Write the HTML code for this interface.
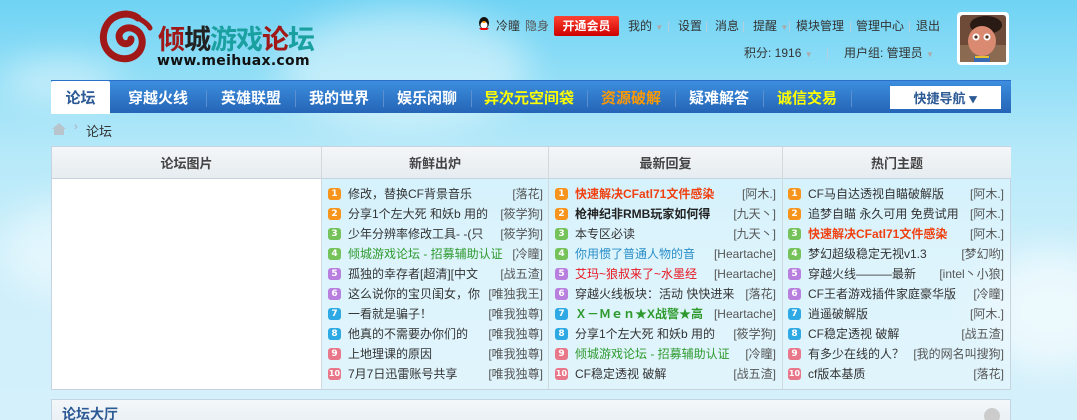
<!DOCTYPE html>
<html><head><meta charset="utf-8">
<style>
*{margin:0;padding:0;box-sizing:border-box}
html,body{width:1077px;height:420px;overflow:hidden}
body{font:12px "Liberation Sans","Noto Sans CJK SC",sans-serif;color:#333;
background:linear-gradient(180deg,#6fd3f4 0px,#8adcf6 60px,#b5e9f9 150px,#cdeffb 260px,#d4f0fb 420px);position:relative}
.cloud{position:absolute;border-radius:50%;background:rgba(255,255,255,.45);filter:blur(18px)}
.a{position:absolute}
.logo-cn{position:absolute;left:158px;top:22px;font:bold 27px "Noto Sans CJK SC",sans-serif;line-height:32px;letter-spacing:-1px}
.logo-en{position:absolute;left:157px;top:52px;font:bold 14px "DejaVu Sans",sans-serif;line-height:18px;color:#111;letter-spacing:.3px}
.top{position:absolute;top:18px;font-size:12px;line-height:16px;color:#333;white-space:nowrap}
.top span{position:absolute}
.sep{color:#b8cfdc}
.ar{color:#aaa;font-size:8px}
.nav{position:absolute;left:51px;top:80px;width:960px;height:33px;background:linear-gradient(#3c8ede,#2564b6);border-top:1px solid #2a70c8}
.nav div{position:absolute;top:0;height:33px;font:bold 15px "Noto Sans CJK SC",sans-serif;line-height:33px;color:#fff;text-align:center}
.nav i{position:absolute;top:9px;width:1px;height:17px;background:#5b8fd0}
.tbl{position:absolute;left:51px;top:146px;width:960px;height:244px;border:1px solid #c7d3de;background:rgba(235,248,253,.55)}
.th{position:absolute;top:0;height:32px;text-align:center;font:bold 13px "Noto Sans CJK SC",sans-serif;line-height:32px;color:#444;background:linear-gradient(#f4f6f8,#e6ecf0);border-bottom:1px solid #c7d3de}
.vl{position:absolute;top:0;width:1px;height:242px;background:#d2d9de}
.row{position:absolute;height:20px;line-height:20px;font-size:12px;white-space:nowrap}
.b{position:absolute;left:0;top:4px;width:13px;height:12px;border-radius:3px;color:#fff;font:bold 9px "DejaVu Sans",sans-serif;line-height:12px;text-align:center}
.t{position:absolute;left:20px}
.u{position:absolute;right:0;color:#555}
.c1,.c2{background:#f7941d}.c3,.c4{background:#76c25a}.c5,.c6{background:#b97fde}.c7,.c8{background:#2ea9e3}.c9,.c10{background:#e9778a}
.sec{position:absolute;left:51px;top:399px;width:960px;height:30px;border:1px solid #c3d4e2;background:linear-gradient(#f3f7fa,#e8eef3)}
</style></head><body>
<div class="cloud" style="left:280px;top:10px;width:250px;height:120px"></div>
<div class="cloud" style="left:0;top:200px;width:150px;height:100px"></div>
<div class="cloud" style="left:980px;top:250px;width:140px;height:120px;background:rgba(255,255,255,.6)"></div>
<div class="cloud" style="left:0;top:60px;width:120px;height:40px;background:rgba(255,255,255,.5)"></div>

<svg class="a" style="left:98px;top:8px" width="58" height="58" viewBox="0 0 58 58">
<path d="M40 10 C30 2 10 6 6 24 C2 42 18 54 32 50 C46 46 48 28 38 22 C28 16 18 24 22 32 C25 38 33 36 33 31" fill="none" stroke="#a01818" stroke-width="7" stroke-linecap="round"/>
<path d="M38 9 C44 12 50 16 52 20" fill="none" stroke="#a01818" stroke-width="5" stroke-linecap="round"/>
</svg>
<div class="logo-cn"><span style="color:#a01818">倾</span><span style="color:#222">城</span><span style="color:#1aa0a0">游戏</span><span style="color:#a01818">论</span><span style="color:#1aa0a0">坛</span></div>
<div class="logo-en">www.meihuax.com</div>

<svg class="a" style="left:476px;top:16px" width="16" height="16" viewBox="0 0 16 16"><ellipse cx="8" cy="7" rx="5" ry="6" fill="#111"/><ellipse cx="8" cy="9" rx="3.5" ry="3.5" fill="#fff"/><path d="M3 12 h10 l-2 2 h-6z" fill="#e00"/><ellipse cx="8" cy="6" rx="1.8" ry="1" fill="#f90"/></svg>
<div class="top" style="left:0;width:1077px">
<span style="left:496px">冷瞳</span><span style="left:525px;color:#555">隐身</span>
<span style="left:554px;top:-2px;width:65px;height:20px;background:linear-gradient(#f43,#c00);color:#fff;font-weight:bold;text-align:center;line-height:20px;border-radius:2px">开通会员</span>
<span style="left:628px">我的 <span class="ar" style="position:static">▼</span></span>
<span class="sep" style="left:667px">|</span>
<span style="left:678px">设置</span><span class="sep" style="left:705px">|</span>
<span style="left:715px">消息</span><span class="sep" style="left:742px">|</span>
<span style="left:753px">提醒 <span class="ar" style="position:static">▼</span></span><span class="sep" style="left:788px">|</span>
<span style="left:796px">模块管理</span><span class="sep" style="left:849px">|</span>
<span style="left:856px">管理中心</span><span class="sep" style="left:908px">|</span>
<span style="left:916px">退出</span>
<span style="left:744px;top:27px">积分: 1916 <span class="ar" style="position:static">▼</span></span>
<span class="sep" style="left:826px;top:27px">|</span>
<span style="left:844px;top:27px">用户组: 管理员 <span class="ar" style="position:static">▼</span></span>
</div>
<div class="a" style="left:957px;top:12px;width:52px;height:53px;background:#fff;border-radius:4px;padding:3px">
<svg width="46" height="47" viewBox="0 0 46 47"><rect width="46" height="47" rx="3" fill="#6e4a38"/><rect y="30" width="46" height="17" fill="#8a6a50"/><ellipse cx="26" cy="10" rx="16" ry="9" fill="#2a1a14"/><ellipse cx="22" cy="26" rx="14" ry="15" fill="#d98a70"/><circle cx="16" cy="22" r="3.5" fill="#fff"/><circle cx="27" cy="22" r="3.5" fill="#fff"/><circle cx="16" cy="22" r="1.6" fill="#532"/><circle cx="27" cy="22" r="1.6" fill="#532"/><path d="M14 41 h16 v6 h-16z" fill="#3a6bb0"/><path d="M15 41 h14 v2 h-14z" fill="#e8c030"/></svg></div>

<div class="nav">
<div style="left:0;width:59px;background:#fff;color:#2c5a95;border-radius:2px 2px 0 0">论坛</div>
<div style="left:64px;width:86px">穿越火线</div><i style="left:155px"></i>
<div style="left:156px;width:88px">英雄联盟</div><i style="left:244px"></i>
<div style="left:244px;width:88px">我的世界</div><i style="left:332px"></i>
<div style="left:332px;width:88px">娱乐闲聊</div><i style="left:420px"></i>
<div style="left:420px;width:116px;color:#ff0">异次元空间袋</div><i style="left:536px"></i>
<div style="left:536px;width:88px;color:#f90">资源破解</div><i style="left:624px"></i>
<div style="left:624px;width:88px">疑难解答</div><i style="left:712px"></i>
<div style="left:712px;width:88px;color:#ff0">诚信交易</div><i style="left:800px"></i>
<div style="left:839px;top:5px;width:111px;height:23px;line-height:23px;background:#fff;color:#2c5a95;font-size:13px">快捷导航 <span style="font-size:9px">▼</span></div>
</div>

<svg class="a" style="left:52px;top:123px" width="14" height="12" viewBox="0 0 14 12"><path d="M7 0 L14 6 H12 V12 H2 V6 H0Z" fill="#b7c4cc"/></svg>
<div class="a" style="left:74px;top:121px;color:#aab;font-size:11px">›</div>
<div class="a" style="left:86px;top:121px;font-size:13px;color:#333">论坛</div>

<div class="tbl">
<div style="position:absolute;left:0;top:0;width:269px;height:242px;background:#fff"></div>
<div class="th" style="left:0;width:269px">论坛图片</div>
<div class="th" style="left:270px;width:226px">新鲜出炉</div>
<div class="th" style="left:497px;width:233px">最新回复</div>
<div class="th" style="left:731px;width:228px">热门主题</div>
<div class="vl" style="left:269px"></div><div class="vl" style="left:496px"></div><div class="vl" style="left:730px"></div>
</div>
<div class="sec"><div style="position:absolute;left:10px;top:4px;font:bold 14px 'Noto Sans CJK SC',sans-serif;line-height:20px;color:#2c5a95">论坛大厅</div>
<div style="position:absolute;left:932px;top:8px;width:16px;height:16px;border-radius:50%;background:#ccc"></div></div>

<div class="a" style="left:0;top:0">
<div class="row" style="left:328px;top:184px;width:215px"><span class="b c1">1</span><span class="t">修改，替换CF背景音乐</span><span class="u">[落花]</span></div>
<div class="row" style="left:328px;top:204px;width:215px"><span class="b c2">2</span><span class="t">分享1个左大死 和妖b 用的</span><span class="u">[筱学狗]</span></div>
<div class="row" style="left:328px;top:224px;width:215px"><span class="b c3">3</span><span class="t">少年分辨率修改工具- -(只</span><span class="u">[筱学狗]</span></div>
<div class="row" style="left:328px;top:244px;width:215px"><span class="b c4">4</span><span class="t" style="color:#2e9a2e">倾城游戏论坛 - 招募辅助认证</span><span class="u">[冷瞳]</span></div>
<div class="row" style="left:328px;top:264px;width:215px"><span class="b c5">5</span><span class="t">孤独的幸存者[超清][中文</span><span class="u">[战五渣]</span></div>
<div class="row" style="left:328px;top:284px;width:215px"><span class="b c6">6</span><span class="t">这么说你的宝贝闺女，你</span><span class="u">[唯独我王]</span></div>
<div class="row" style="left:328px;top:304px;width:215px"><span class="b c7">7</span><span class="t">一看就是骗子！</span><span class="u">[唯我独尊]</span></div>
<div class="row" style="left:328px;top:324px;width:215px"><span class="b c8">8</span><span class="t">他真的不需要办你们的</span><span class="u">[唯我独尊]</span></div>
<div class="row" style="left:328px;top:344px;width:215px"><span class="b c9">9</span><span class="t">上地理课的原因</span><span class="u">[唯我独尊]</span></div>
<div class="row" style="left:328px;top:364px;width:215px"><span class="b c10" style="font-size:8px">10</span><span class="t">7月7日迅雷账号共享</span><span class="u">[唯我独尊]</span></div>

<div class="row" style="left:555px;top:184px;width:221px"><span class="b c1">1</span><span class="t" style="color:#f04010;font-weight:bold">快速解决CFatl71文件感染</span><span class="u">[阿木.]</span></div>
<div class="row" style="left:555px;top:204px;width:221px"><span class="b c2">2</span><span class="t" style="font-weight:bold;color:#222">枪神纪非RMB玩家如何得</span><span class="u">[九天丶]</span></div>
<div class="row" style="left:555px;top:224px;width:221px"><span class="b c3">3</span><span class="t">本专区必读</span><span class="u">[九天丶]</span></div>
<div class="row" style="left:555px;top:244px;width:221px"><span class="b c4">4</span><span class="t" style="color:#2a8fc8">你用惯了普通人物的音</span><span class="u">[Heartache]</span></div>
<div class="row" style="left:555px;top:264px;width:221px"><span class="b c5">5</span><span class="t" style="color:#e8141e">艾玛~狼叔来了~水墨经</span><span class="u">[Heartache]</span></div>
<div class="row" style="left:555px;top:284px;width:221px"><span class="b c6">6</span><span class="t">穿越火线板块：活动 快快进来</span><span class="u">[落花]</span></div>
<div class="row" style="left:555px;top:304px;width:221px"><span class="b c7">7</span><span class="t" style="color:#2e9a2e;font-weight:bold">Ｘ－Ｍｅｎ★X战警★高</span><span class="u">[Heartache]</span></div>
<div class="row" style="left:555px;top:324px;width:221px"><span class="b c8">8</span><span class="t">分享1个左大死 和妖b 用的</span><span class="u">[筱学狗]</span></div>
<div class="row" style="left:555px;top:344px;width:221px"><span class="b c9">9</span><span class="t" style="color:#2e9a2e">倾城游戏论坛 - 招募辅助认证</span><span class="u">[冷瞳]</span></div>
<div class="row" style="left:555px;top:364px;width:221px"><span class="b c10" style="font-size:8px">10</span><span class="t">CF稳定透视 破解</span><span class="u">[战五渣]</span></div>

<div class="row" style="left:788px;top:184px;width:216px"><span class="b c1">1</span><span class="t">CF马自达透视自瞄破解版</span><span class="u">[阿木.]</span></div>
<div class="row" style="left:788px;top:204px;width:216px"><span class="b c2">2</span><span class="t">追梦自瞄 永久可用 免费试用</span><span class="u">[阿木.]</span></div>
<div class="row" style="left:788px;top:224px;width:216px"><span class="b c3">3</span><span class="t" style="color:#f04010;font-weight:bold">快速解决CFatl71文件感染</span><span class="u">[阿木.]</span></div>
<div class="row" style="left:788px;top:244px;width:216px"><span class="b c4">4</span><span class="t">梦幻超级稳定无视v1.3</span><span class="u">[梦幻哟]</span></div>
<div class="row" style="left:788px;top:264px;width:216px"><span class="b c5">5</span><span class="t">穿越火线———最新</span><span class="u">[intel丶小狼]</span></div>
<div class="row" style="left:788px;top:284px;width:216px"><span class="b c6">6</span><span class="t">CF王者游戏插件家庭豪华版</span><span class="u">[冷瞳]</span></div>
<div class="row" style="left:788px;top:304px;width:216px"><span class="b c7">7</span><span class="t">逍遥破解版</span><span class="u">[阿木.]</span></div>
<div class="row" style="left:788px;top:324px;width:216px"><span class="b c8">8</span><span class="t">CF稳定透视 破解</span><span class="u">[战五渣]</span></div>
<div class="row" style="left:788px;top:344px;width:216px"><span class="b c9">9</span><span class="t">有多少在线的人？</span><span class="u">[我的网名叫搜狗]</span></div>
<div class="row" style="left:788px;top:364px;width:216px"><span class="b c10" style="font-size:8px">10</span><span class="t">cf版本基质</span><span class="u">[落花]</span></div>
</div>
</body></html>
